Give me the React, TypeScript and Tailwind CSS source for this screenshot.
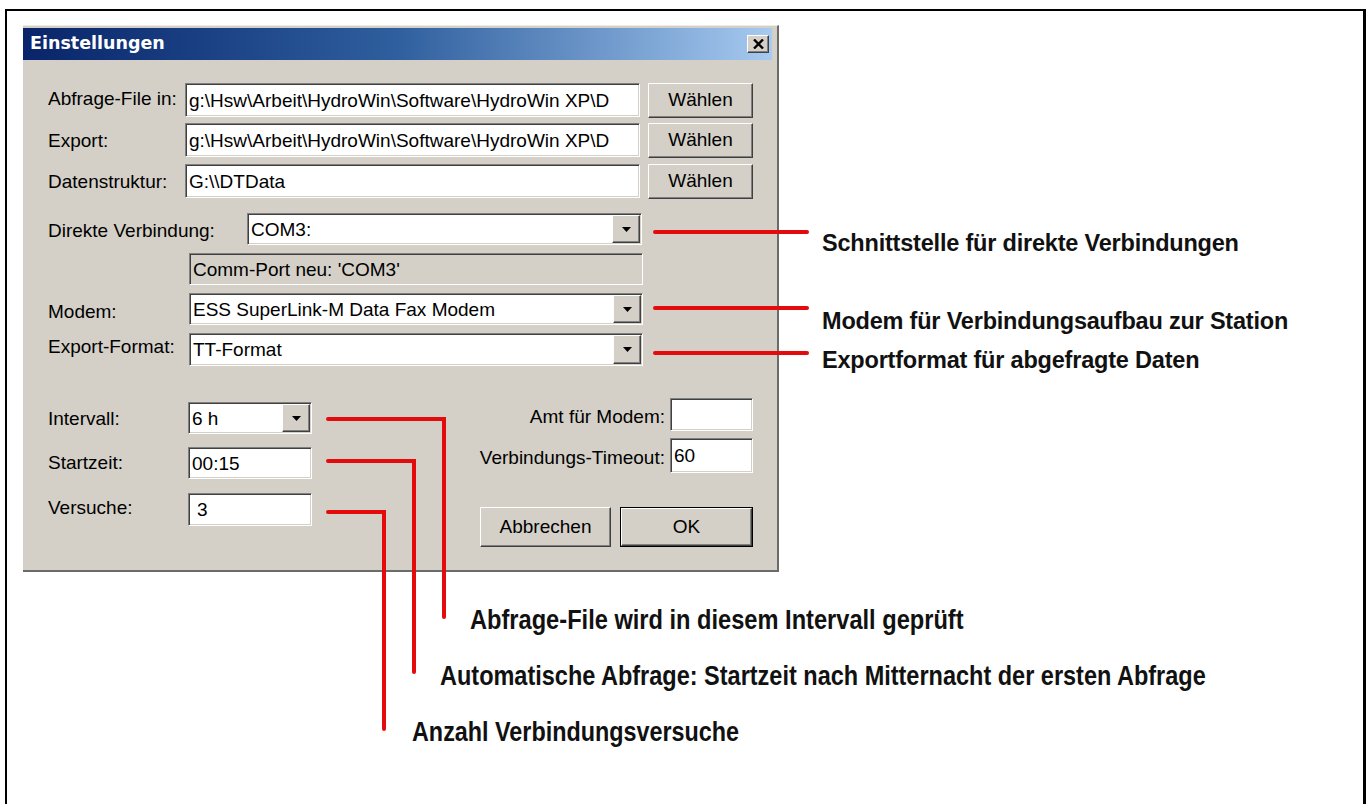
import React from "react";

const SUNKEN =
  "border border-t-[#808080] border-l-[#808080] border-b-white border-r-white shadow-[inset_1px_1px_0_#404040,inset_-1px_-1px_0_#d4d0c8]";
const RAISED =
  "border border-t-white border-l-white border-b-[#404040] border-r-[#404040] shadow-[inset_-1px_-1px_0_#808080]";

function Field({ value = "", className = "", gray = false }: { value?: string; className?: string; gray?: boolean }) {
  return (
    <div
      className={`${SUNKEN} ${gray ? "bg-[#d4d0c8]" : "bg-white"} p-[1px] flex items-center overflow-hidden whitespace-nowrap ${className}`}
    >
      <span className="pl-[2px] leading-none">{value}</span>
    </div>
  );
}

function DownArrow() {
  return (
    <svg width="9" height="5" viewBox="0 0 9 5">
      <path d="M0 0h9L4.5 5z" fill="#000" />
    </svg>
  );
}

function Combo({ value, className = "" }: { value: string; className?: string }) {
  return (
    <div className={`${SUNKEN} bg-white p-[1px] flex items-stretch ${className}`}>
      <div className="flex-1 flex items-center overflow-hidden whitespace-nowrap pl-[2px] leading-none">{value}</div>
      <div className={`${RAISED} w-[28px] bg-[#d4d0c8] flex items-center justify-center`}>
        <DownArrow />
      </div>
    </div>
  );
}

function Button({ label, className = "", isDefault = false }: { label: string; className?: string; isDefault?: boolean }) {
  if (isDefault) {
    return (
      <div className={`border border-black bg-[#d4d0c8] flex ${className}`}>
        <div className={`${RAISED} flex-1 flex items-center justify-center`}>{label}</div>
      </div>
    );
  }
  return <div className={`${RAISED} bg-[#d4d0c8] flex items-center justify-center ${className}`}>{label}</div>;
}

function Label({ text, className = "" }: { text: string; className?: string }) {
  return <div className={`whitespace-nowrap ${className}`}>{text}</div>;
}

function Dialog() {
  return (
    <div className="w-[756px] h-[547px] bg-[#d4d0c8] border-t border-t-[#ecebe6] border-r-2 border-r-[#6b6b6b] border-b-2 border-b-[#6b6b6b] pt-[2px] flex flex-col text-[19px] text-black font-['Liberation_Sans',Arial,sans-serif]">
      {/* title bar */}
      <div className="h-[32px] mr-[5px] bg-gradient-to-r from-[#0a246a] via-[#2f5f9e] to-[#a6caf0] flex items-center justify-between pl-[7px] pr-[3px]">
        <span className="text-white font-bold text-[17.5px] font-['DejaVu_Sans',sans-serif] leading-none">Einstellungen</span>
        <div className={`${RAISED} bg-[#d4d0c8] w-[22px] h-[18px] flex items-center justify-center`}>
          <svg width="11" height="10" viewBox="0 0 11 10">
            <path d="M1 0.5l9 9M10 0.5l-9 9" stroke="#000" strokeWidth="2.4" />
          </svg>
        </div>
      </div>

      {/* path rows */}
      <div className="flex items-start mt-[23px]">
        <Label text="Abfrage-File in:" className="w-[162px] pl-[25px] h-[34px] leading-[32px]" />
        <Field value="g:\Hsw\Arbeit\HydroWin\Software\HydroWin XP\D" className="w-[455px] h-[34px]" />
        <Button label="Wählen" className="ml-[8px] w-[105px] h-[35px]" />
      </div>
      <div className="flex items-start mt-[5px]">
        <Label text="Export:" className="w-[162px] pl-[25px] h-[34px] leading-[36px]" />
        <Field value="g:\Hsw\Arbeit\HydroWin\Software\HydroWin XP\D" className="w-[455px] h-[34px]" />
        <Button label="Wählen" className="ml-[8px] w-[105px] h-[35px]" />
      </div>
      <div className="flex items-start mt-[6px]">
        <Label text="Datenstruktur:" className="w-[162px] pl-[25px] h-[34px] leading-[36px]" />
        <Field value="G:\\DTData" className="w-[455px] h-[34px]" />
        <Button label="Wählen" className="ml-[8px] w-[105px] h-[35px]" />
      </div>

      {/* connection rows */}
      <div className="flex items-start mt-[14px]">
        <Label text="Direkte Verbindung:" className="w-[224px] pl-[25px] h-[32px] leading-[36px]" />
        <Combo value="COM3:" className="w-[395px] h-[32px]" />
      </div>
      <div className="flex items-start mt-[8px]">
        <div className="w-[166px]" />
        <Field value="Comm-Port neu: 'COM3'" gray className="w-[454px] h-[32px]" />
      </div>
      <div className="flex items-start mt-[8px]">
        <Label text="Modem:" className="w-[166px] pl-[25px] h-[32px] leading-[38px]" />
        <Combo value="ESS SuperLink-M Data Fax Modem" className="w-[454px] h-[32px]" />
      </div>
      <div className="flex items-start mt-[8px]">
        <Label text="Export-Format:" className="w-[166px] pl-[25px] h-[33px] leading-[28px]" />
        <Combo value="TT-Format" className="w-[454px] h-[33px]" />
      </div>

      {/* schedule + modem options */}
      <div className="flex justify-between items-start mt-[32px] pr-[24px]">
        <div className="flex flex-col">
          <div className="flex items-start mt-[4px]">
            <Label text="Intervall:" className="w-[165px] pl-[25px] h-[32px] leading-[34px]" />
            <Combo value="6 h" className="w-[124px] h-[32px]" />
          </div>
          <div className="flex items-start mt-[13px]">
            <Label text="Startzeit:" className="w-[165px] pl-[25px] h-[32px] leading-[32px]" />
            <Field value="00:15" className="w-[124px] h-[32px]" />
          </div>
          <div className="flex items-start mt-[14px]">
            <Label text="Versuche:" className="w-[165px] pl-[25px] h-[33px] leading-[30px]" />
            <Field value="3" className="w-[124px] h-[33px] pl-[6px]" />
          </div>
        </div>
        <div className="flex flex-col items-end">
          <div className="flex items-start">
            <Label text="Amt für Modem:" className="h-[33px] leading-[38px] mr-[5px]" />
            <Field className="w-[83px] h-[33px]" />
          </div>
          <div className="flex items-start mt-[7px]">
            <Label text="Verbindungs-Timeout:" className="h-[35px] leading-[40px] mr-[5px]" />
            <Field value="60" className="w-[83px] h-[35px]" />
          </div>
          <div className="flex items-start mt-[34px]">
            <Button label="Abbrechen" className="w-[131px] h-[40px]" />
            <Button label="OK" isDefault className="ml-[9px] w-[133px] h-[40px]" />
          </div>
        </div>
      </div>
    </div>
  );
}

export default function App() {
  return (
    <div className="relative w-[1368px] h-[804px] bg-white overflow-hidden">
      <div className="pt-[9px] pl-[5px]">
        <div className="w-[1361px] h-[795px] border-t-2 border-l-2 border-r-[3px] border-black flex flex-col">
          <div className="flex items-start">
            <div className="ml-[16px] mt-[14px]">
              <Dialog />
            </div>
            <div className="ml-[43px] pt-[219px] flex flex-col font-['Liberation_Sans',Arial,sans-serif] font-bold text-[23.5px] leading-[26px] text-[#111] tracking-[-0.2px]">
              <div>Schnittstelle für direkte Verbindungen</div>
              <div className="mt-[52px]">Modem für Verbindungsaufbau zur Station</div>
              <div className="mt-[13px]">Exportformat für abgefragte Daten</div>
            </div>
          </div>
          <div className="flex flex-col items-start font-['Liberation_Sans',Arial,sans-serif] font-bold text-[27px] leading-[32px] text-[#111]">
            <div className="ml-[463px] mt-[32px] whitespace-nowrap origin-left scale-x-[0.875]">
              Abfrage-File wird in diesem Intervall geprüft
            </div>
            <div className="ml-[433px] mt-[24px] whitespace-nowrap origin-left scale-x-[0.87]">
              Automatische Abfrage: Startzeit nach Mitternacht der ersten Abfrage
            </div>
            <div className="ml-[405px] mt-[24px] whitespace-nowrap origin-left scale-x-[0.865]">
              Anzahl Verbindungsversuche
            </div>
          </div>
        </div>
      </div>

      {/* callout strokes */}
      <svg className="absolute inset-0 pointer-events-none" width="1368" height="804" viewBox="0 0 1368 804">
        <g stroke="#e30b0b" strokeWidth="4" fill="none" strokeLinecap="round" strokeLinejoin="miter">
          <path d="M655 232H807" />
          <path d="M655 308H807" />
          <path d="M655 353H807" />
          <path d="M328 419H444V617" />
          <path d="M328 461H414V672" />
          <path d="M328 512H384V729" />
        </g>
      </svg>
    </div>
  );
}
